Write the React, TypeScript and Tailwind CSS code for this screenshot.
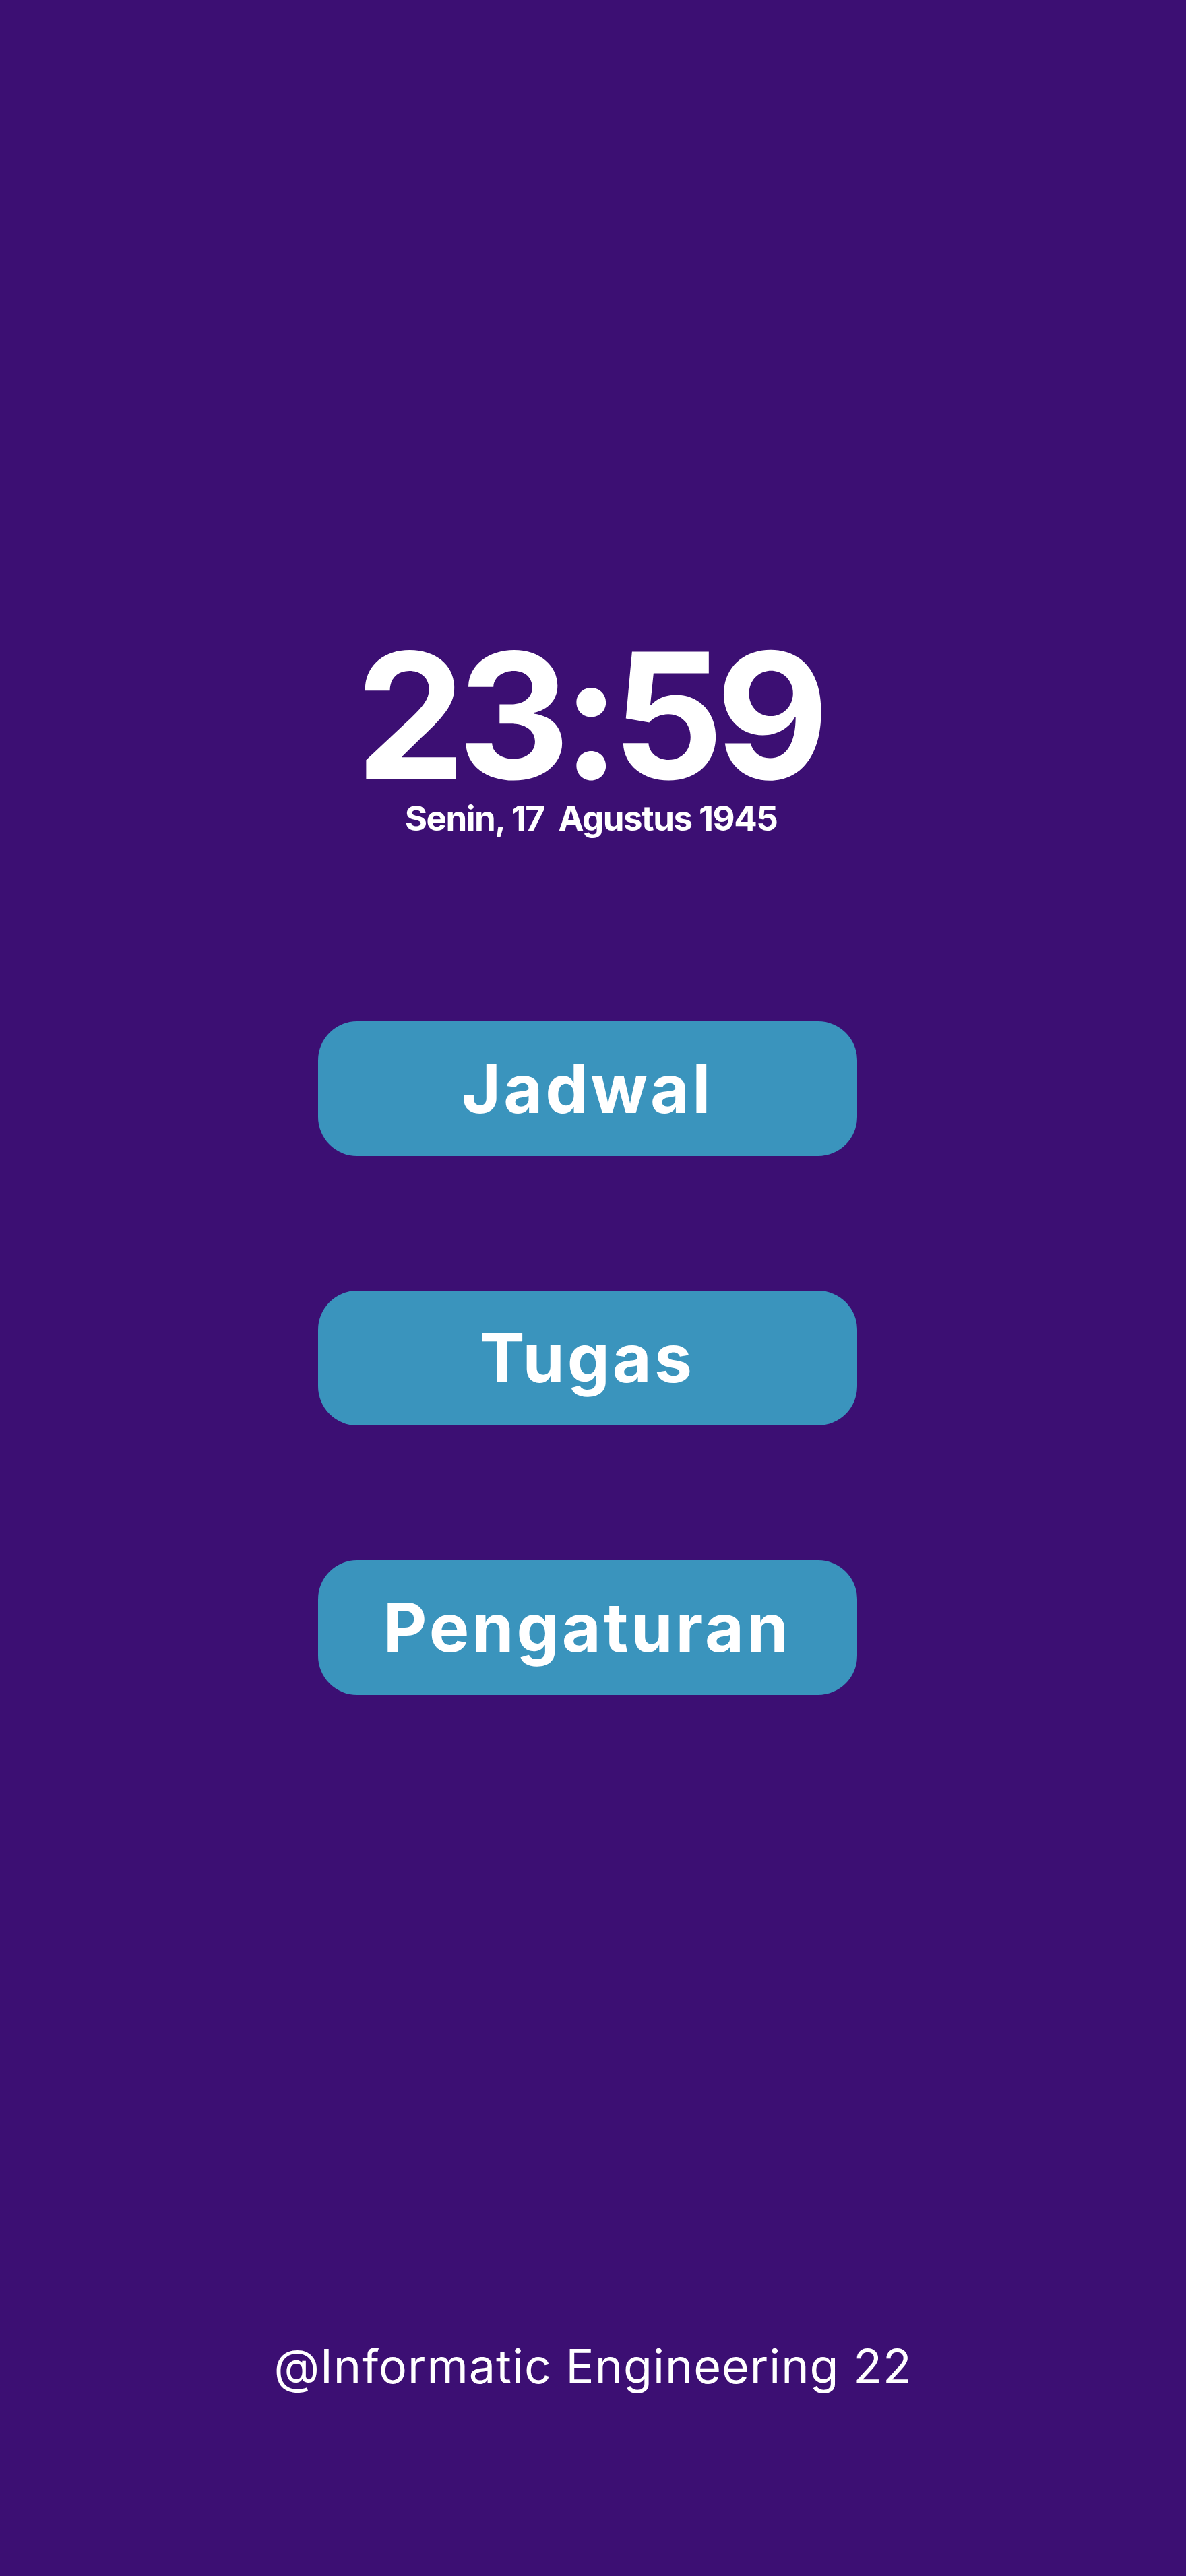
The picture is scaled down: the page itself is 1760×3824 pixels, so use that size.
const menu = ["Jadwal", "Tugas", "Pengaturan"];

export default function App() {
  return (
    <div
      className="min-h-[3824px] w-full bg-[#3c0f73] flex flex-col items-center text-white"
      style={{ fontFamily: "Inter, 'Noto Sans', sans-serif" }}
    >
      {/* Clock */}
      <div className="pt-[935px] mr-[6px] flex flex-col items-center">
        <div className="text-[259px] leading-[0.98] font-bold tracking-[-12px] pr-[8px]">23:59</div>
        <div className="text-[51px] leading-none font-bold tracking-[-1.5px] whitespace-pre">
          {"Senin, 17  Agustus 1945"}
        </div>
      </div>

      {/* Menu */}
      <div className="mt-[276px] mr-[17px] flex flex-col gap-[200px]">
        {menu.map((label) => (
          <button
            key={label}
            className="w-[800px] h-[200px] rounded-[58px] bg-[#3a94bd] flex items-center justify-center text-[100px] leading-none font-bold tracking-[4px] text-white"
          >
            {label}
          </button>
        ))}
      </div>

      {/* Footer */}
      <div className="mt-[962px] text-[70px] leading-none font-normal tracking-[1px]">
        @Informatic Engineering 22
      </div>
    </div>
  );
}
